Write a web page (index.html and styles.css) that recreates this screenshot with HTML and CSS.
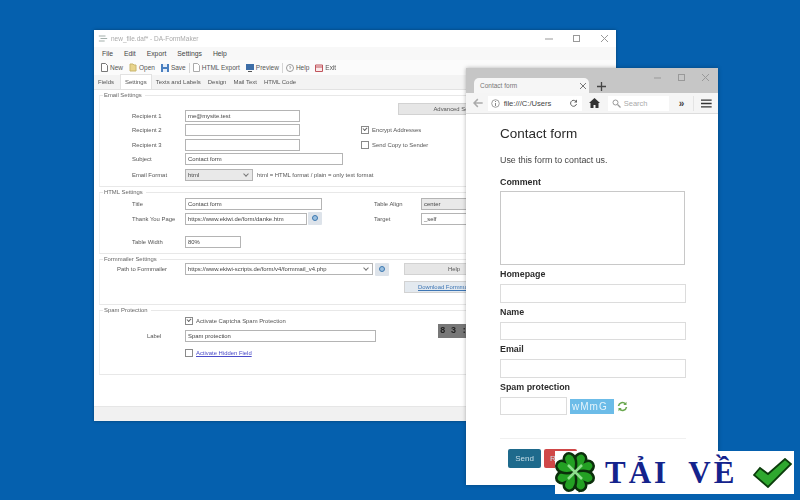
FILE: index.html
```html
<!DOCTYPE html>
<html lang="en">
<head>
	<meta charset="utf-8">
	<title>DA-FormMaker</title>
	<link rel="stylesheet" href="styles.css">
</head>
<body>
	<div class="desk">
		<!-- form maker window -->
		<div class="win">
			<div class="title">
				<svg class="appico" width="10" height="9" viewBox="0 0 12 10"><path d="M1 2h8M3 5h8M1 8h7" stroke="#a4b0ac" stroke-width="1.300" fill="none"/></svg>
				<span>new_file.daf* - DA-FormMaker</span>
				<div class="caps">
					<svg width="10" height="10" viewBox="0 0 10 10"><path d="M1 5h8" stroke="#999"/></svg>
					<svg width="10" height="10" viewBox="0 0 10 10"><rect x="1.500" y="1.500" width="6" height="6" fill="none" stroke="#999"/></svg>
					<svg width="10" height="10" viewBox="0 0 10 10"><path d="M1 1l7 7M8 1l-7 7" stroke="#999"/></svg>
				</div>
			</div>
			<div class="menu"><span>File</span><span>Edit</span><span>Export</span><span>Settings</span><span>Help</span></div>
			<div class="tools">
				<span class="tool"><svg width="7" height="9" viewBox="0 0 7 9"><path d="M.5.500h4l2 2v6H.5z" fill="#fff" stroke="#777"/></svg>New</span>
				<span class="tool"><svg width="8" height="9" viewBox="0 0 8 9"><path d="M1 1h3l1 1h2v6H1z" fill="#e8d48c" stroke="#c9b66e"/></svg>Open</span>
				<span class="tool"><svg width="8" height="8" viewBox="0 0 8 8"><path d="M0 0h8v8H0z" fill="#4a7fc0"/><path d="M2 0h4v3H2zM2 5h4v3H2z" fill="#e6eef8"/></svg>Save</span>
				<span class="tsep"></span>
				<span class="tool"><svg width="7" height="9" viewBox="0 0 7 9"><path d="M.5.500h4l2 2v6H.5z" fill="#fff" stroke="#aaa"/></svg>HTML Export</span>
				<span class="tool"><svg width="8" height="8" viewBox="0 0 8 8"><path d="M0 0h8v6H0z" fill="#3f6fa8"/><path d="M2 7.500h4" stroke="#555"/></svg>Preview</span>
				<span class="tsep"></span>
				<span class="tool"><svg width="8" height="8" viewBox="0 0 8 8"><circle cx="4" cy="4" r="3.500" fill="#fff" stroke="#999"/><path d="M3 3.200q1-1.400 2 0-.2.700-1 1v1" fill="none" stroke="#999" stroke-width=".8"/></svg>Help</span>
				<span class="tool"><svg width="8" height="8" viewBox="0 0 8 8"><path d="M.5 1h7v6.500h-7z" fill="#fbeaea" stroke="#c0545c"/><path d="M.5 3h7" stroke="#c0545c"/></svg>Exit</span>
			</div>
			<div class="tabs">
				<span>Fields</span><span class="on">Settings</span><span>Texts and Labels</span><span>Design</span><span>Mail Text</span><span>HTML Code</span>
			</div>

			<div class="pane">
				<fieldset class="grp g-mail">
					<legend>Email Settings</legend>
					<div class="row r1">
						<label class="lbl">Recipient 1</label><div class="inp w115">me@mysite.test</div>
						<div class="btn adv">Advanced Settings</div>
					</div>
					<div class="row">
						<label class="lbl">Recipient 2</label><div class="inp w115"></div>
						<span class="chk on enc"></span><span class="chktxt">Encrypt Addresses</span>
					</div>
					<div class="row">
						<label class="lbl">Recipient 3</label><div class="inp w115"></div>
						<span class="chk enc"></span><span class="chktxt">Send Copy to Sender</span>
					</div>
					<div class="row">
						<label class="lbl">Subject</label><div class="inp w158">Contact form</div>
					</div>
					<div class="row r5">
						<label class="lbl">Email Format</label><div class="sel w68">html<i class="arr"></i></div>
						<span class="hint">html = HTML format / plain = only text format</span>
					</div>
				</fieldset>

				<fieldset class="grp g-html">
					<legend>HTML Settings</legend>
					<div class="row">
						<label class="lbl">Title</label><div class="inp w137">Contact form</div>
						<label class="lbl2">Table Align</label><div class="sel w80">center</div>
					</div>
					<div class="row">
						<label class="lbl">Thank You Page</label><div class="inp w122">https://www.ekiwi.de/form/danke.htm</div>
						<span class="go"></span>
						<label class="lbl2">Target</label><div class="inp w80">_self</div>
					</div>
					<div class="row r-table">
						<label class="lbl">Table Width</label><div class="inp w56">80%</div>
					</div>
				</fieldset>

				<fieldset class="grp g-fm">
					<legend>Formmailer Settings</legend>
					<div class="row">
						<label class="lbl lbl-path">Path to Formmailer</label><div class="sel inp w188">https://www.ekiwi-scripts.de/form/v4/formmail_v4.php<i class="arr"></i></div>
						<span class="go"></span>
						<div class="btn help">Help</div>
					</div>
					<div class="row">
						<div class="btn dl">Download Formmailer</div>
					</div>
				</fieldset>

				<fieldset class="grp g-spam">
					<legend>Spam Protection</legend>
					<div class="row">
						<span class="chk on box"></span><span class="chktxt">Activate Captcha Spam Protection</span>
					</div>
					<div class="row r-label">
						<label class="lbl lbl-label">Label</label><div class="inp w191">Spam protection</div>
						<div class="cap">8 3 :</div>
					</div>
					<div class="row r-hidden">
						<span class="chk box"></span><a class="lnk">Activate Hidden Field</a>
					</div>
				</fieldset>
			</div>
			<div class="status"></div>
		</div>

		<!-- browser preview -->
		<div class="brow">
			<div class="bar">
				<div class="tab"><span>Contact form</span>
					<svg width="8" height="8" viewBox="0 0 8 8"><path d="M1 1l6 6M7 1l-6 6" stroke="#777"/></svg>
				</div>
				<svg class="plus" width="9" height="9" viewBox="0 0 9 9"><path d="M4.500 0v9M0 4.500h9" stroke="#444" stroke-width="1.300"/></svg>
				<div class="caps">
					<svg width="10" height="10" viewBox="0 0 10 10"><path d="M1 5h7" stroke="#999"/></svg>
					<svg width="10" height="10" viewBox="0 0 10 10"><rect x="1.500" y="1.500" width="6" height="6" fill="none" stroke="#999"/></svg>
					<svg width="10" height="10" viewBox="0 0 10 10"><path d="M1 1l7 7M8 1l-7 7" stroke="#999"/></svg>
				</div>
			</div>
			<div class="nav">
				<svg width="11" height="10" viewBox="0 0 11 10"><path d="M5 1L1 5l4 4M1 5h9" stroke="#aaa" stroke-width="1.500" fill="none"/></svg>
				<div class="url">
					<svg width="9" height="9" viewBox="0 0 9 9"><circle cx="4.500" cy="4.500" r="3.800" fill="none" stroke="#888" stroke-width=".8"/><path d="M4.500 4v3M4.500 2v1" stroke="#888"/></svg>
					<span>file:///C:/Users</span>
					<svg class="rel" width="9" height="9" viewBox="0 0 9 9"><path d="M7.500 5a3 3 0 1 1-1-3l1.500 1" fill="none" stroke="#666"/><path d="M8 .5v3H5z" fill="#666"/></svg>
				</div>
				<svg class="home" width="11" height="10" viewBox="0 0 11 10"><path d="M5.500 0L0 5h1.500v5h3V7h2v3h3V5H11z" fill="#333"/></svg>
				<div class="find">
					<svg width="9" height="9" viewBox="0 0 9 9"><circle cx="3.500" cy="3.500" r="2.500" fill="none" stroke="#999"/><path d="M5.500 5.500L8.500 8.500" stroke="#999" stroke-width="1.300"/></svg>
					<span>Search</span>
				</div>
				<span class="more">»</span>
				<span class="vsep"></span>
				<svg width="11" height="9" viewBox="0 0 11 9"><path d="M0 1h11M0 4.500h11M0 8h11" stroke="#333" stroke-width="1.500"/></svg>
			</div>
			<div class="page">
				<h1>Contact form</h1>
				<p>Use this form to contact us.</p>
				<b class="f1">Comment</b>
				<div class="fld area"></div>
				<b>Homepage</b>
				<div class="fld"></div>
				<b>Name</b>
				<div class="fld"></div>
				<b>Email</b>
				<div class="fld"></div>
				<b>Spam protection</b>
				<div class="capt">
					<div class="fld short"></div>
					<div class="cimg">wMmG</div>
					<svg width="11" height="11" viewBox="0 0 11 11"><path d="M1.500 5a4 4 0 0 1 7-2M9.500 6a4 4 0 0 1-7 2" fill="none" stroke="#6aa84f" stroke-width="1.600"/><path d="M9.500.8v3.200H6.300zM1.500 10.200V7h3.200z" fill="#6aa84f"/></svg>
				</div>
				<div class="rule"></div>
				<div class="acts"><span class="send">Send</span><span class="reset">Reset</span></div>
			</div>
		</div>

		<!-- download banner -->
		<div class="promo">
			<svg width="40" height="42" viewBox="0 0 40 42">
				<path d="M20 20q2 12 5 20" fill="none" stroke="#0b2e0b" stroke-width="2.500"/>
				<g fill="#23a023" stroke="#0b2e0b" stroke-width="2.500">
					<path transform="rotate(45 20 20)" d="M20 20C10 14 8 8 10 4 12 0 18 0 20 5 22 0 28 0 30 4 32 8 30 14 20 20z"/>
					<path transform="rotate(135 20 20)" d="M20 20C10 14 8 8 10 4 12 0 18 0 20 5 22 0 28 0 30 4 32 8 30 14 20 20z"/>
					<path transform="rotate(225 20 20)" d="M20 20C10 14 8 8 10 4 12 0 18 0 20 5 22 0 28 0 30 4 32 8 30 14 20 20z"/>
					<path transform="rotate(315 20 20)" d="M20 20C10 14 8 8 10 4 12 0 18 0 20 5 22 0 28 0 30 4 32 8 30 14 20 20z"/>
				</g>
				<path d="M13 13l14 14M27 13L13 27" stroke="#8fe08f" stroke-width="2.500"/>
			</svg>
			<span class="tai">TẢI VỀ</span>
			<svg width="39" height="30" viewBox="0 0 39 30"><path d="M1 17l6-7 8 6L32 1l6 5-23 23z" fill="#2fa82f" stroke="#0b3d0b" stroke-width="1.800"/></svg>
		</div>
	</div>
</body>
</html>
```

FILE: styles.css
```css
html, body {
	margin: 0;
	height: 100%;
	overflow: hidden;
}
.desk {
	position: relative;
	width: 800px;
	height: 500px;
	overflow: hidden;
	background-color: #0560ae;
	font-family: "Liberation Sans", Arial, sans-serif;
}

/* form maker window */
.win {
	position: absolute;
	left: 94px;
	top: 30px;
	width: 522px;
	height: 391px;
	display: flex;
	flex-direction: column;
	background: #fff;
	box-shadow: 0 0 3px rgba(0,0,0,.35);
	font-size: 5.900px;
	color: #555;
	filter: blur(.35px);
}
.title {
	height: 17px;
	flex: none;
	display: flex;
	align-items: center;
	padding: 0 0 0 4px;
	gap: 3px;
	color: #aaa;
	font-size: 6.500px;
}
.caps {
	margin-left: auto;
	display: flex;
	gap: 18px;
	padding-right: 6px;
}
.menu {
	height: 13px;
	flex: none;
	display: flex;
	align-items: center;
	gap: 11px;
	padding-left: 8px;
	background: #f8f8f8;
	font-size: 6.800px;
	color: #444;
}
.tools {
	height: 15px;
	flex: none;
	display: flex;
	align-items: center;
	gap: 6px;
	padding-left: 7px;
	background: #fbfbfb;
	color: #555;
	font-size: 6.500px;
}
.tool {
	display: flex;
	align-items: center;
	gap: 2px;
}
.tsep {
	width: 1px;
	height: 10px;
	margin: 0 -3px;
	background: #d4d4d4;
}
.tabs {
	height: 15px;
	flex: none;
	display: flex;
	align-items: center;
	gap: 7px;
	padding-left: 4px;
	background: #f3f3f3;
	border-bottom: 1px solid #e2e2e2;
	box-sizing: border-box;
	font-size: 6px;
}
.tabs .on {
	align-self: stretch;
	display: flex;
	align-items: center;
	padding: 0 4px;
	margin: -1px -3px 0 -1px;
	background: #fff;
	border: 1px solid #e2e2e2;
	border-bottom: 0;
}
.pane {
	flex: 1;
	padding: 2px 0 0 5px;
}
.grp {
	margin: 0 0 2px;
	padding: 0;
	border: 0;
	border-top: 1px solid #e8e8e8;
	border-bottom: 1px solid #e8e8e8;
	border-left: 1px solid #f0f0f0;
	min-inline-size: 0;
}
.grp legend {
	margin-left: 3px;
	padding: 0 3px 0 1px;
	color: #666;
	font-size: 5.900px;
}
.g-mail { height: 93px; }
.g-html { height: 63px; }
.g-fm { height: 47px; }
.g-spam { height: 66px; }
.g-mail .r1 { margin-top: 10.500px; }
.g-html .row:first-of-type { margin-top: 2px; }
.g-spam .row:first-of-type { margin-top: 1px; }
.row {
	display: flex;
	align-items: center;
	height: 14.500px;
	white-space: nowrap;
}
.g-mail .r5 { margin-top: 1.500px; }
.r-table { margin-top: 9px; }
.r-hidden { margin-top: 3px; }
.lbl {
	box-sizing: border-box;
	width: 85px;
	padding-left: 32px;
	flex: none;
}
.lbl-path { padding-left: 17px; }
.lbl-label { padding-left: 47px; }
.lbl2 {
	margin-left: 52px;
	width: 47px;
	flex: none;
}
.inp, .sel {
	box-sizing: border-box;
	height: 12px;
	line-height: 10px;
	padding-left: 2px;
	border: 1px solid #b4b4b4;
	background: #fff;
	flex: none;
	position: relative;
	color: #444;
	overflow: hidden;
}
.sel { background: #e9e9e9; }
.sel.inp { background: #fff; }
.arr {
	position: absolute;
	right: 4px;
	top: 2px;
	width: 3px;
	height: 3px;
	border-right: 1px solid #777;
	border-bottom: 1px solid #777;
	transform: rotate(45deg);
}
.w56 { width: 56px; }
.w68 { width: 68px; }
.w80 { width: 80px; }
.w115 { width: 115px; }
.w122 { width: 122px; }
.w137 { width: 137px; }
.w158 { width: 158px; }
.w188 { width: 188px; }
.w191 { width: 191px; }
.go {
	box-sizing: border-box;
	flex: none;
	width: 14px;
	height: 13px;
	margin-left: 1px;
	background: #dde3ea;
	border: 3px solid #dde3ea;
	border-radius: 1px;
	position: relative;
}
.go::after {
	content: "";
	position: absolute;
	left: 1px;
	top: 0;
	width: 6px;
	height: 6px;
	border-radius: 50%;
	border: 1px solid #3c78b0;
	box-sizing: border-box;
	background: #9cc0e0;
}
.g-fm .go { margin-left: 2px; }
.btn {
	box-sizing: border-box;
	flex: none;
	height: 12px;
	line-height: 10px;
	background: #e6e6e6;
	border: 1px solid #d2d2d2;
	text-align: center;
	overflow: hidden;
}
.adv {
	width: 120px;
	margin: -14px 0 0 98px;
}
.help {
	width: 100px;
	margin-left: 15px;
}
.dl {
	width: 100px;
	margin: 7px 0 0 304px;
	text-align: left;
	padding-left: 13px;
	background: #e3e9ef;
	color: #3e76b4;
	text-decoration: underline;
}
.chk {
	box-sizing: border-box;
	flex: none;
	width: 8px;
	height: 8px;
	border: 1px solid #8a8a8a;
	background: #fff;
	position: relative;
}
.chk.on::after {
	content: "";
	position: absolute;
	left: 1px;
	top: 0;
	width: 3px;
	height: 2px;
	border-left: 1px solid #666;
	border-bottom: 1px solid #666;
	transform: rotate(-45deg);
}
.enc { margin-left: 61px; }
.box { margin-left: 85px; }
.chktxt, .lnk { margin-left: 3px; }
.hint { margin-left: 4px; }
.lnk {
	color: #4a4ac8;
	text-decoration: underline;
}
.cap {
	flex: none;
	box-sizing: border-box;
	margin: -10px 0 0 62px;
	width: 44px;
	height: 14px;
	padding-left: 2px;
	background: #777;
	color: #222;
	font: bold 9px/14px "Liberation Mono", monospace;
}
.status {
	height: 14px;
	flex: none;
	background: #f1f1f1;
	border-top: 1px solid #e6e6e6;
}

/* browser */
.brow {
	position: absolute;
	left: 466px;
	top: 68px;
	width: 252px;
	height: 417px;
	background: #fff;
	display: flex;
	flex-direction: column;
	box-shadow: 0 0 4px rgba(0,0,0,.3);
	filter: blur(.3px);
}
.bar {
	height: 25px;
	flex: none;
	box-sizing: border-box;
	padding: 10px 0 0 8px;
	display: flex;
	background: #c6c6c6;
	position: relative;
}
.tab {
	box-sizing: border-box;
	width: 115px;
	height: 15px;
	padding: 0 2px 0 6px;
	display: flex;
	align-items: center;
	justify-content: space-between;
	background: #f6f6f6;
	border-radius: 5px 5px 0 0;
	color: #777;
	font-size: 6.500px;
}
.plus {
	margin: 4px 0 0 8px;
}
.bar .caps {
	position: absolute;
	right: 0;
	top: 5px;
	gap: 14px;
	padding-right: 7px;
}
.nav {
	height: 21px;
	flex: none;
	box-sizing: border-box;
	display: flex;
	align-items: center;
	padding: 0 6px 0 7px;
	background: #f5f5f5;
	border-bottom: 1px solid #ddd;
}
.url {
	box-sizing: border-box;
	width: 97px;
	height: 15px;
	margin-left: 4px;
	padding: 0 4px 0 3px;
	display: flex;
	align-items: center;
	gap: 4px;
	background: #fff;
	font-size: 7.600px;
	color: #444;
}
.url span {
	white-space: nowrap;
}
.rel { margin-left: auto; }
.home { margin-left: 7px; flex: none; }
.find {
	box-sizing: border-box;
	width: 63px;
	height: 15px;
	margin-left: 8px;
	padding-left: 4px;
	display: flex;
	align-items: center;
	gap: 3px;
	background: #fff;
	color: #aaa;
	font-size: 7.500px;
}
.more {
	margin-left: 10px;
	color: #444;
	font-size: 10px;
	font-weight: bold;
}
.vsep {
	width: 1px;
	height: 15px;
	margin: 0 7px 0 9px;
	background: #e4e4e4;
}
.page {
	flex: 1;
	padding: 11px 34px 0;
	display: flex;
	flex-direction: column;
	color: #333;
	font-size: 9px;
}
.page h1 {
	margin: 0;
	font-size: 13.500px;
	line-height: 17px;
	font-weight: normal;
	color: #2a2a2a;
}
.page p {
	margin: 13px 0 0;
	font-size: 8.900px;
	line-height: 11px;
	color: #444;
}
.page b {
	display: block;
	line-height: 11px;
	height: 11px;
	font-size: 8.900px;
	margin-top: 4px;
	color: #2c2c2c;
}
.page b.f1 { margin-top: 11px; }
.fld {
	box-sizing: border-box;
	width: 186px;
	height: 18.500px;
	margin-top: 4px;
	border: 1px solid #dcdcdc;
	background: #fff;
	flex: none;
}
.area {
	width: 185px;
	height: 74px;
	margin-top: 3px;
	border-color: #c8c8c8;
}
.capt {
	display: flex;
	align-items: center;
	margin-top: 4px;
}
.short {
	width: 67px;
	margin: 0;
}
.cimg {
	box-sizing: border-box;
	width: 44px;
	height: 15px;
	margin: 2px 2px 0 3px;
	padding-left: 2px;
	background: #6cbce8;
	color: #e4f4fc;
	font: 10px/15px "Liberation Sans", sans-serif;
	letter-spacing: 1px;
}
.capt svg { margin: 2px 0 0 1px; }
.rule {
	width: 186px;
	height: 1px;
	margin-top: 23px;
	background: #f0f0f0;
}
.acts {
	display: flex;
	gap: 3px;
	margin: 10px 0 0 8px;
}
.acts span {
	box-sizing: border-box;
	width: 33px;
	height: 19px;
	border-radius: 2px;
	color: #c8dfe8;
	text-align: center;
	font-size: 8px;
	line-height: 19px;
}
.send { background: #1e6a8c; }
.reset { background: #d04848; width: 34px; }

/* banner in the corner */
.promo {
	position: absolute;
	left: 555px;
	top: 451px;
	width: 239px;
	height: 43px;
	box-sizing: border-box;
	padding: 0 2px 0 0;
	display: flex;
	align-items: center;
	background: #fff;
}
.tai {
	margin-left: 10px;
	width: 148px;
	font: bold 31px/43px "Liberation Serif", serif;
	letter-spacing: 3px;
	word-spacing: 9px;
	white-space: nowrap;
	color: #14238c;
}
```
